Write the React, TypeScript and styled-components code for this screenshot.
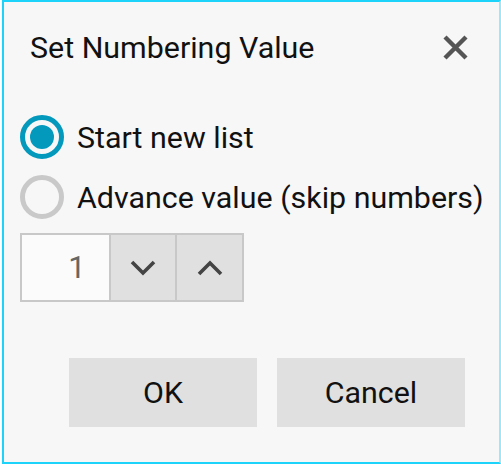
import React, { useState } from 'react';
import styled, { createGlobalStyle } from 'styled-components';

const Global = createGlobalStyle`
  html, body {
    margin: 0;
    padding: 0;
    background: #ffffff;
  }
  body {
    font-family: Roboto, "Liberation Sans", sans-serif;
  }
`;

const Frame = styled.div`
  box-sizing: border-box;
  margin-left: 2px;
  width: 499px;
  height: 464px;
  background: #f7f7f7;
  border: 2px solid #1dd3f9;
  border-right-color: #9be8fa;
  display: flex;
  flex-direction: column;
`;

const Header = styled.div`
  height: 90px;
  display: flex;
  align-items: center;
  justify-content: space-between;
  padding: 0 31px 0 26px;
`;

const Title = styled.h1`
  margin: 0;
  font-size: 30.4px;
  font-weight: 400;
  color: #111;
`;

const CloseButton = styled.button`
  width: 25px;
  height: 25px;
  padding: 0;
  border: 0;
  background: none;
  display: flex;
  cursor: pointer;
`;

const Options = styled.div`
  padding: 15px 0 0 16px;
  display: flex;
  flex-direction: column;
`;

const OptionRow = styled.label`
  height: 60px;
  display: flex;
  align-items: center;
  gap: 13px;
  font-size: 30.4px;
  color: #111;
  cursor: pointer;
`;

const Radio = styled.span<{ $checked: boolean }>`
  box-sizing: border-box;
  width: 44px;
  height: 44px;
  border-radius: 50%;
  border: 5px solid ${(p) => (p.$checked ? '#0399bd' : '#c9c9c9')};
  background: #f7f7f7;
  display: flex;
  align-items: center;
  justify-content: center;
  &::after {
    content: '';
    width: 24px;
    height: 24px;
    border-radius: 50%;
    background: ${(p) => (p.$checked ? '#0399bd' : 'transparent')};
  }
`;

const Spinner = styled.div`
  margin: 6px 0 0 16px;
  display: flex;
  width: 224px;
  height: 69px;
  box-sizing: border-box;
  border: 2px solid #c8c8c8;
`;

const ValueBox = styled.div`
  width: 87px;
  background: #fbfbfb;
  display: flex;
  align-items: center;
  justify-content: flex-end;
  padding-right: 23px;
  box-sizing: border-box;
  font-size: 31px;
  color: #666;
`;

const StepButton = styled.button`
  width: 67px;
  padding: 0;
  border: 0;
  border-left: 2px solid #c8c8c8;
  background: #e0e0e0;
  display: flex;
  align-items: center;
  justify-content: center;
  cursor: pointer;
`;

const Footer = styled.div`
  margin-top: 56px;
  padding-left: 65px;
  display: flex;
  gap: 20px;
`;

const ActionButton = styled.button`
  width: 188px;
  height: 69px;
  border: 0;
  background: #e0e0e0;
  font-family: Roboto, "Liberation Sans", sans-serif;
  font-size: 30.4px;
  color: #111;
  cursor: pointer;
`;

const Chevron = ({ up }: { up?: boolean }) => (
  <svg width="26" height="16" viewBox="0 0 26 16">
    <path
      d={up ? 'M2 14 L13 3 L24 14' : 'M2 2 L13 13 L24 2'}
      fill="none"
      stroke="#444"
      strokeWidth="3.6"
    />
  </svg>
);

export default function App() {
  const [mode, setMode] = useState<'new' | 'advance'>('new');
  const [value, setValue] = useState(1);

  return (
    <>
      <Global />
      <Frame>
        <Header>
          <Title>Set Numbering Value</Title>
          <CloseButton aria-label="Close">
            <svg width="25" height="25" viewBox="0 0 25 25">
              <path d="M2 2 L23 23 M23 2 L2 23" stroke="#555" strokeWidth="4.4" />
            </svg>
          </CloseButton>
        </Header>
        <Options>
          <OptionRow onClick={() => setMode('new')}>
            <Radio $checked={mode === 'new'} />
            Start new list
          </OptionRow>
          <OptionRow onClick={() => setMode('advance')}>
            <Radio $checked={mode === 'advance'} />
            Advance value (skip numbers)
          </OptionRow>
        </Options>
        <Spinner>
          <ValueBox>{value}</ValueBox>
          <StepButton onClick={() => setValue((v) => Math.max(0, v - 1))}>
            <Chevron />
          </StepButton>
          <StepButton onClick={() => setValue((v) => v + 1)}>
            <Chevron up />
          </StepButton>
        </Spinner>
        <Footer>
          <ActionButton>OK</ActionButton>
          <ActionButton>Cancel</ActionButton>
        </Footer>
      </Frame>
    </>
  );
}
